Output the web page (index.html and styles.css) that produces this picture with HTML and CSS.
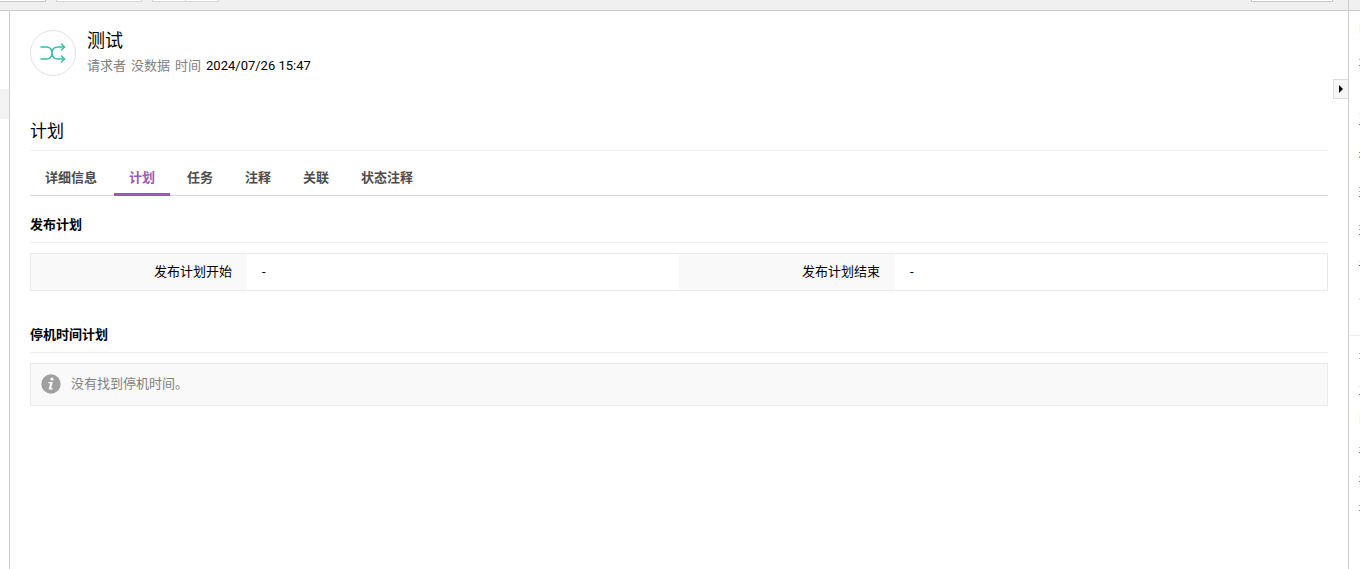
FILE: index.html
```html
<!DOCTYPE html>
<html lang="zh-CN">
<head>
<meta charset="utf-8">
<title>测试 - 计划</title>
<link rel="stylesheet" href="styles.css">
</head>
<body>
<div class="app">
  <div class="main-side">
    <div class="toolbar" role="toolbar">
      <button class="tool tool-first" type="button" aria-label="编辑"></button>
      <button class="tool tool-wide" type="button" aria-label="操作"></button>
      <div class="tool-group">
        <button class="tool tool-half" type="button" aria-label="上一个"></button>
        <button class="tool tool-half" type="button" aria-label="下一个"></button>
      </div>
      <button class="tool tool-last" type="button" aria-label="查看"></button>
    </div>
    <div class="workspace">
      <nav class="left-nav"><div class="left-nav-active"></div></nav>
      <main class="content">
        <header class="summary">
          <div class="avatar">
            <svg width="26" height="20" viewBox="0 0 26 20" fill="none" stroke="#36bfa9" stroke-width="1.5" stroke-linecap="round" stroke-linejoin="round">
              <path d="M1 4h5c4 0 6 2 6 6s2 6 6 6h6.500M1 16h5c4 0 6-2 6-6s2-6 6-6h6.500"/>
              <path d="M21.500 1l3 3-3 3M21.500 13l3 3-3 3"/>
            </svg>
          </div>
          <div class="summary-text">
            <h1 class="title">测试</h1>
            <p class="meta"><span>请求者</span> <span>没数据</span> <span>时间</span> <time class="date" datetime="2024-07-26T15:47">2024/07/26 15:47</time></p>
          </div>
          <button class="collapse" type="button" aria-label="展开侧栏"><svg width="4" height="8" viewBox="0 0 4 8"><path d="M0 0l4 4-4 4z" fill="#000"/></svg></button>
        </header>
        <h2 class="page-heading">计划</h2>
        <nav class="tabs">
          <a class="tab" href="#details">详细信息</a>
          <a class="tab tab-active" href="#plan" aria-current="page">计划</a>
          <a class="tab" href="#tasks">任务</a>
          <a class="tab" href="#notes">注释</a>
          <a class="tab" href="#links">关联</a>
          <a class="tab" href="#status">状态注释</a>
        </nav>
        <section class="section" id="plan">
          <h3 class="section-title">发布计划</h3>
          <table class="fields">
            <tr>
              <th scope="row">发布计划开始</th><td>-</td>
              <th scope="row">发布计划结束</th><td>-</td>
            </tr>
          </table>
        </section>
        <section class="section">
          <h3 class="section-title">停机时间计划</h3>
          <div class="notice">
            <svg width="20" height="20" viewBox="0 0 20 20"><circle cx="10" cy="10" r="9.700" fill="#a0a0a0"/><circle cx="11" cy="5" r="1.600" fill="#f9f9f9"/><path d="M7.500 8h4.200l-1.400 6.200h1.500l-.3 1.200H7.700L9.100 9.200H7.300z" fill="#f9f9f9"/></svg>
            <span>没有找到停机时间。</span>
          </div>
        </section>
      </main>
    </div>
  </div>
  <aside class="rail">
    <div class="rail-top"></div>
    <svg class="rail-marks" width="11" height="558" viewBox="0 11 11 558" shape-rendering="crispEdges">
      <path fill="#eeeeee" d="M0 335h11v1H0z"/>
      <path fill="#ffffcc" d="M10 24h1v9h-1zM10 412h1v12h-1z"/>
      <path fill="#f2ddb8" d="M10 113h1v1h-1zM10 261h1v1h-1zM10 298h1v2h-1zM10 386h1v1h-1z"/>
      <path fill="#dca878" d="M10 59h1v1h-1zM10 156h1v2h-1zM10 187h1v1h-1zM10 191h1v1h-1zM10 225h1v1h-1zM10 229h1v1h-1zM10 353h1v1h-1zM10 358h1v1h-1zM10 447h1v1h-1zM10 476h1v1h-1zM10 505h1v1h-1z"/>
      <path fill="#b88030" d="M10 65h1v1h-1zM10 124h1v1h-1zM10 152h1v1h-1zM10 196h1v1h-1zM10 234h1v1h-1zM10 394h1v1h-1zM10 452h1v1h-1zM10 481h1v1h-1zM10 510h1v1h-1z"/>
      <path fill="#805020" d="M10 265h1v1h-1z"/>
    </svg>
  </aside>
</div>
</body>
</html>
```
FILE: styles.css
```css
* { box-sizing: border-box; }
body {
  margin: 0;
  background: #fff;
  color: #000;
  font: 13px/20px Roboto, "Noto Sans CJK SC", sans-serif;
}
h1, h2, h3, p { margin: 0; font-weight: 400; }
button { padding: 0; font: inherit; }
svg { display: block; flex: none; }
.app { display: flex; min-height: 100vh; }
.main-side { flex: 1; min-width: 0; display: flex; flex-direction: column; }
.toolbar {
  display: flex;
  align-items: flex-start;
  gap: 10px;
  height: 11px;
  padding-right: 15px;
  background: #f0f0f0;
  border-bottom: 1px solid #ccc;
}
.tool {
  height: 2px;
  background: #fff;
  border: 1px solid #d4d4d4;
  border-top: 0;
}
.tool-first { width: 46px; border-left: 0; border-color: #c8c8c8; }
.tool-wide { width: 86px; }
.tool-group { display: flex; }
.tool-half { width: 34px; }
.tool-half + .tool-half { width: 33px; border-left: 0; }
.tool-last { width: 82px; margin-left: auto; border-color: #c8c8c8; }
.workspace { flex: 1; display: flex; }
.left-nav { width: 10px; padding-top: 78px; border-right: 1px solid #ccc; }
.left-nav-active { height: 30px; background: #f3f3f3; }
.content { flex: 1; min-width: 0; padding: 16px 20px 20px; }
.summary { position: relative; display: flex; gap: 11px; }
.avatar {
  display: flex;
  align-items: center;
  justify-content: center;
  width: 46px;
  height: 46px;
  margin-top: 3px;
  border: 1px solid #e1e1e1;
  border-radius: 50%;
}
.title { padding-top: 1px; font-size: 18px; line-height: 26px; }
.meta { display: flex; gap: 5px; padding-top: 2px; color: #808080; }
.date { color: #000; }
.collapse {
  position: absolute;
  top: 52px;
  right: -20px;
  display: flex;
  align-items: center;
  justify-content: center;
  width: 15px;
  height: 20px;
  background: #f6f6f6;
  border: 1px solid #ddd;
  border-right: 0;
}
.page-heading {
  margin-top: 43px;
  padding-bottom: 6px;
  border-bottom: 1px solid #eee;
  font-size: 17px;
  line-height: 25px;
}
.tabs {
  display: flex;
  gap: 2px;
  height: 45px;
  padding-top: 10px;
  border-bottom: 1px solid #d8d8d8;
}
.tab {
  height: 35px;
  padding: 7px 15px 5px;
  border-bottom: 3px solid transparent;
  color: #4d4d4d;
  font-weight: 700;
  text-decoration: none;
}
.tab-active { border-color: #9b59b6; color: #9b59b6; }
.section { padding-top: 19px; }
.section + .section { padding-top: 34px; }
.section-title {
  padding-bottom: 7px;
  border-bottom: 1px solid #eee;
  font-size: 13px;
  font-weight: 700;
}
.fields {
  width: 100%;
  height: 38px;
  margin-top: 10px;
  border: 1px solid #eaeaea;
  border-spacing: 0;
  table-layout: fixed;
}
.fields th, .fields td { height: 36px; padding: 0 15px; vertical-align: middle; }
.fields th { width: 16.66%; background: #f9f9f9; font-weight: 400; text-align: right; }
.fields td { text-align: left; }
.notice {
  display: flex;
  align-items: center;
  gap: 10px;
  margin-top: 10px;
  padding: 10px 10px 11px;
  background: #f9f9f9;
  border: 1px solid #eaeaea;
  color: #808080;
}
.rail { width: 12px; border-left: 1px solid #ccc; }
.rail-top { height: 11px; background: #f0f0f0; border-bottom: 1px solid #ccc; }
```
